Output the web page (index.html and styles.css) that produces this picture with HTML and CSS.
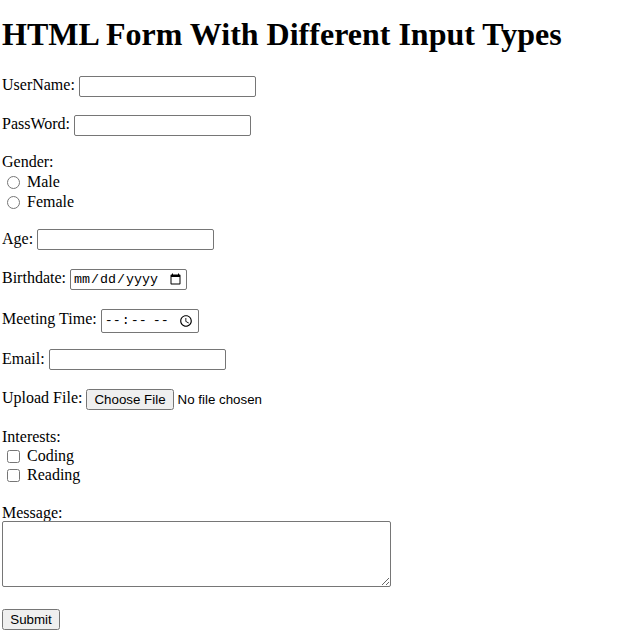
FILE: index.html
```html
<!DOCTYPE html>
<html>
<head>
<meta charset="utf-8">
<title>HTML Form</title>
<link rel="stylesheet" href="styles.css">
</head>
<body>
<h1 class="title">HTML Form With Different Input Types</h1>
<form class="form">
  <p class="row field-row">UserName: <input class="text-field user" type="text"></p>
  <p class="row field-row">PassWord: <input class="text-field" type="password"></p>
  <p class="row">Gender:<br><input class="radio" type="radio" name="g"> Male<br><input class="radio" type="radio" name="g"> Female</p>
  <p class="row field-row">Age: <input class="text-field" type="number"></p>
  <p class="row field-row date-row">Birthdate: <input class="date-field" type="date"></p>
  <p class="row field-row tall-row">Meeting Time: <input class="time-field" type="time"></p>
  <p class="row field-row email-row">Email: <input class="text-field" type="email"></p>
  <p class="row field-row file-row">Upload File: <input class="file-field" type="file"></p>
  <p class="row interests-row">Interests:<br><input class="check" type="checkbox"> Coding<br><input class="check" type="checkbox"> Reading</p>
  <p class="row message-row">Message:<br><textarea class="message"></textarea></p>
  <p class="row"><input class="submit" type="submit" value="Submit"></p>
</form>
</body>
</html>
```
FILE: styles.css
```css
body {
  margin: 0 2px;
  font-family: "Liberation Serif", "Times New Roman", serif;
  font-size: 16px;
  color: #000;
  background: #fff;
}
.title {
  font-size: 32px;
  font-weight: bold;
  margin: 16px 0 21px;
}
.row {
  margin: 16px 0;
  line-height: 20px;
}
.field-row {
  line-height: 22px;
}
.date-row {
  padding-top: 1px;
}
.tall-row {
  line-height: 24px;
  padding-top: 1px;
  margin-bottom: 15px;
}
.email-row {
  margin-top: 15px;
}
.file-row {
  padding-top: 1px;
  padding-bottom: 1px;
}
.interests-row {
  line-height: 19px;
  margin-bottom: 20px;
}
.text-field, .date-field, .time-field {
  box-sizing: border-box;
  height: 21px;
  border: 1px solid #767676;
  border-radius: 2px;
  padding: 1px 2px;
  font-size: 13.33px;
  vertical-align: middle;
  margin: 0;
}
.text-field {
  width: 177px;
  font-family: "Liberation Sans", Arial, sans-serif;
}
.date-field, .time-field {
  font-family: "Liberation Mono", monospace;
}
.date-field { width: 117px; }
.time-field { width: 98px; height: 24px; }
.file-field {
  font-family: "Liberation Sans", Arial, sans-serif;
  font-size: 13.33px;
  vertical-align: middle;
  margin: 0;
}
.radio, .check {
  width: 13px;
  height: 13px;
  margin: 0 3px 0 5px;
  vertical-align: -2px;
}
.message-row {
  line-height: 17px;
  padding-bottom: 3px;
}
.message {
  box-sizing: border-box;
  width: 389px;
  height: 66px;
  border: 1px solid #767676;
  border-radius: 2px;
  margin: 0;
}
.submit {
  box-sizing: border-box;
  width: 58px;
  height: 21px;
  font-family: "Liberation Sans", Arial, sans-serif;
  font-size: 13.33px;
  padding: 1px 6px;
  margin: 0;
}
```
